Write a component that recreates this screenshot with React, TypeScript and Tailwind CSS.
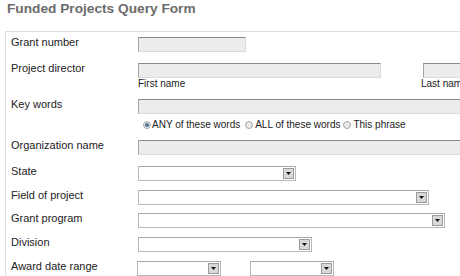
import React from "react";

function TextBox({ className }: { className: string }) {
  return (
    <div
      className={`h-[15px] bg-[#ececec] border border-t-[#8a8a8a] border-l-[#a5a5a5] border-r-[#dadada] border-b-[#dadada] ${className}`}
    />
  );
}

function Select({ className }: { className: string }) {
  return (
    <div className={`h-[15px] flex justify-end items-stretch border border-[#b8b8b8] border-t-[#a8a8a8] bg-white p-[1px] ${className}`}>
      <div className="w-[11px] bg-[#d9d9d9] border border-[#9c9c9c] flex items-center justify-center">
        <svg width="5" height="3" viewBox="0 0 5 3">
          <path d="M0 0h5L2.5 3z" fill="#111" />
        </svg>
      </div>
    </div>
  );
}

function Radio({ checked }: { checked?: boolean }) {
  return (
    <div className="w-[8px] h-[8px] rounded-full border border-[#a8a8a8] bg-[#e8e8e8] flex items-center justify-center">
      {checked && <div className="w-[4px] h-[4px] rounded-full bg-[#4d7290]" />}
    </div>
  );
}

function Label({ children }: { children: React.ReactNode }) {
  return (
    <div className="w-[132px] shrink-0 pl-[5px] pt-[4px] text-[11px] leading-[13px] text-[#222]">
      {children}
    </div>
  );
}

export default function App() {
  return (
    <div className="w-[460px] h-[276px] overflow-hidden bg-white font-['Liberation_Sans',Arial,sans-serif]">
      <h1 className="h-[31px] pl-[7px] text-[13.7px] leading-[18px] font-bold text-[#6b6b6b]">
        Funded Projects Query Form
      </h1>
      <div className="ml-[5px] w-[600px] border-t border-l border-[#dedede]">
        {/* Grant number */}
        <div className="flex h-[26px]">
          <Label>Grant number</Label>
          <div className="pt-[5px]">
            <TextBox className="w-[108px]" />
          </div>
        </div>
        {/* Project director */}
        <div className="flex h-[36px]">
          <Label>Project director</Label>
          <div className="pt-[5px] flex gap-[42px]">
            <div>
              <TextBox className="w-[243px]" />
              <div className="text-[10px] leading-[11px] text-[#222]">First name</div>
            </div>
            <div>
              <TextBox className="w-[100px]" />
              <div className="-ml-[2px] text-[10px] leading-[11px] text-[#222]">Last name</div>
            </div>
          </div>
        </div>
        {/* Key words */}
        <div className="flex h-[41px]">
          <Label>Key words</Label>
          <div className="pt-[5px]">
            <TextBox className="w-[460px]" />
            <div className="mt-[5px] ml-[5px] flex items-center text-[10px] leading-[12px] text-[#222]">
              <Radio checked />
              <span className="ml-[1px] mr-[5px]">ANY of these words</span>
              <Radio />
              <span className="ml-[2px] mr-[3px]">ALL of these words</span>
              <Radio />
              <span className="ml-[2px]">This phrase</span>
            </div>
          </div>
        </div>
        {/* Organization name */}
        <div className="flex h-[26px]">
          <Label>Organization name</Label>
          <div className="pt-[5px]">
            <TextBox className="w-[460px]" />
          </div>
        </div>
        {/* State */}
        <div className="flex h-[24px]">
          <Label>State</Label>
          <div className="pt-[5px]">
            <Select className="w-[158px]" />
          </div>
        </div>
        {/* Field of project */}
        <div className="flex h-[23px]">
          <Label>Field of project</Label>
          <div className="pt-[5px]">
            <Select className="w-[291px]" />
          </div>
        </div>
        {/* Grant program */}
        <div className="flex h-[24px]">
          <Label>Grant program</Label>
          <div className="pt-[5px]">
            <Select className="w-[307px]" />
          </div>
        </div>
        {/* Division */}
        <div className="flex h-[24px]">
          <Label>Division</Label>
          <div className="pt-[5px]">
            <Select className="w-[174px]" />
          </div>
        </div>
        {/* Award date range */}
        <div className="flex h-[24px]">
          <Label>Award date range</Label>
          <div className="pt-[5px] flex gap-[29px] -ml-[1px]">
            <Select className="w-[84px]" />
            <Select className="w-[84px]" />
          </div>
        </div>
      </div>
    </div>
  );
}
